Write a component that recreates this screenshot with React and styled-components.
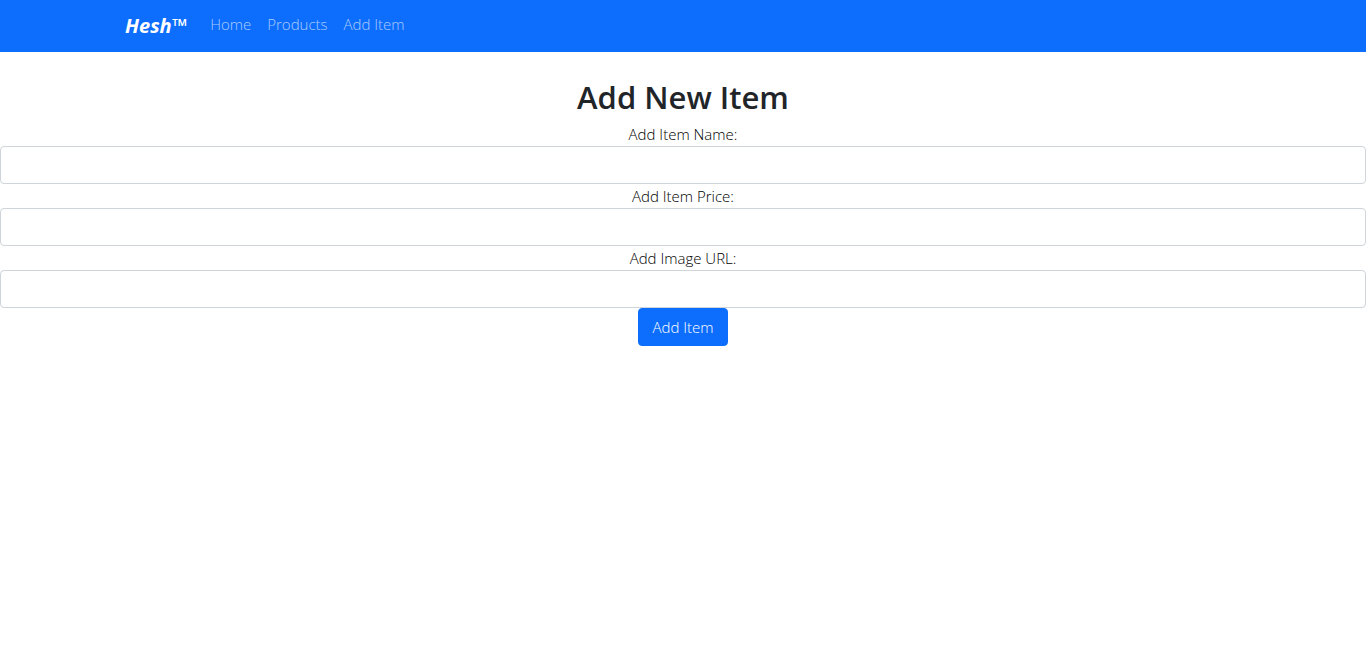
import React from "react";
import styled, { createGlobalStyle } from "styled-components";

const GlobalStyle = createGlobalStyle`
  *, *::before, *::after { box-sizing: border-box; }
  body {
    margin: 0;
    background: #fff;
    color: #212529;
    font-family: "Open Sans", "Noto Sans", sans-serif;
    font-size: 15px;
    font-weight: 300;
    line-height: 24px;
  }
`;

const Navbar = styled.nav`
  background: #0d6efd;
  padding: 6px 12px;
`;

const NavContainer = styled.div`
  display: flex;
  align-items: center;
  max-width: 1140px;
  margin: 0 auto;
  padding: 0 12px;
`;

const Brand = styled.a`
  margin-right: 15px;
  color: #fff;
  font-size: 20px;
  font-style: italic;
  font-weight: 700;
  line-height: 30px;
  text-decoration: none;
`;

const NavLinks = styled.div`
  display: flex;
`;

const NavLink = styled.a`
  padding: 6px 8px 10px;
  color: rgba(255, 255, 255, 0.65);
  text-decoration: none;
`;

const Main = styled.main`
  padding-top: 26px;
  text-align: center;
`;

const Title = styled.h1`
  margin: 0 0 6px;
  font-size: 31px;
  font-weight: 600;
  line-height: 38px;
`;

const Label = styled.label`
  display: block;
  color: #000;
`;

const TextField = styled.input`
  display: block;
  width: 100%;
  height: 38px;
  padding: 6px 12px;
  border: 1px solid #ced4da;
  border-radius: 4px;
  background: #fff;
  color: inherit;
  font: inherit;
`;

const SubmitButton = styled.button`
  height: 38px;
  padding: 6px 13px;
  border: 1px solid #0d6efd;
  border-radius: 4px;
  background: #0d6efd;
  color: #fff;
  font: inherit;
  cursor: pointer;
`;

const links = ["Home", "Products", "Add Item"];

const fields = [
  { id: "item-name", label: "Add Item Name:" },
  { id: "item-price", label: "Add Item Price:" },
  { id: "image-url", label: "Add Image URL:" },
];

export default function App() {
  return (
    <>
      <GlobalStyle />
      <Navbar>
        <NavContainer>
          <Brand href="#">Hesh™</Brand>
          <NavLinks>
            {links.map((link) => (
              <NavLink key={link} href="#">{link}</NavLink>
            ))}
          </NavLinks>
        </NavContainer>
      </Navbar>
      <Main>
        <Title>Add New Item</Title>
        <form onSubmit={(event) => event.preventDefault()}>
          {fields.map(({ id, label }) => (
            <React.Fragment key={id}>
              <Label htmlFor={id}>{label}</Label>
              <TextField id={id} type="text" />
            </React.Fragment>
          ))}
          <SubmitButton type="submit">Add Item</SubmitButton>
        </form>
      </Main>
    </>
  );
}
